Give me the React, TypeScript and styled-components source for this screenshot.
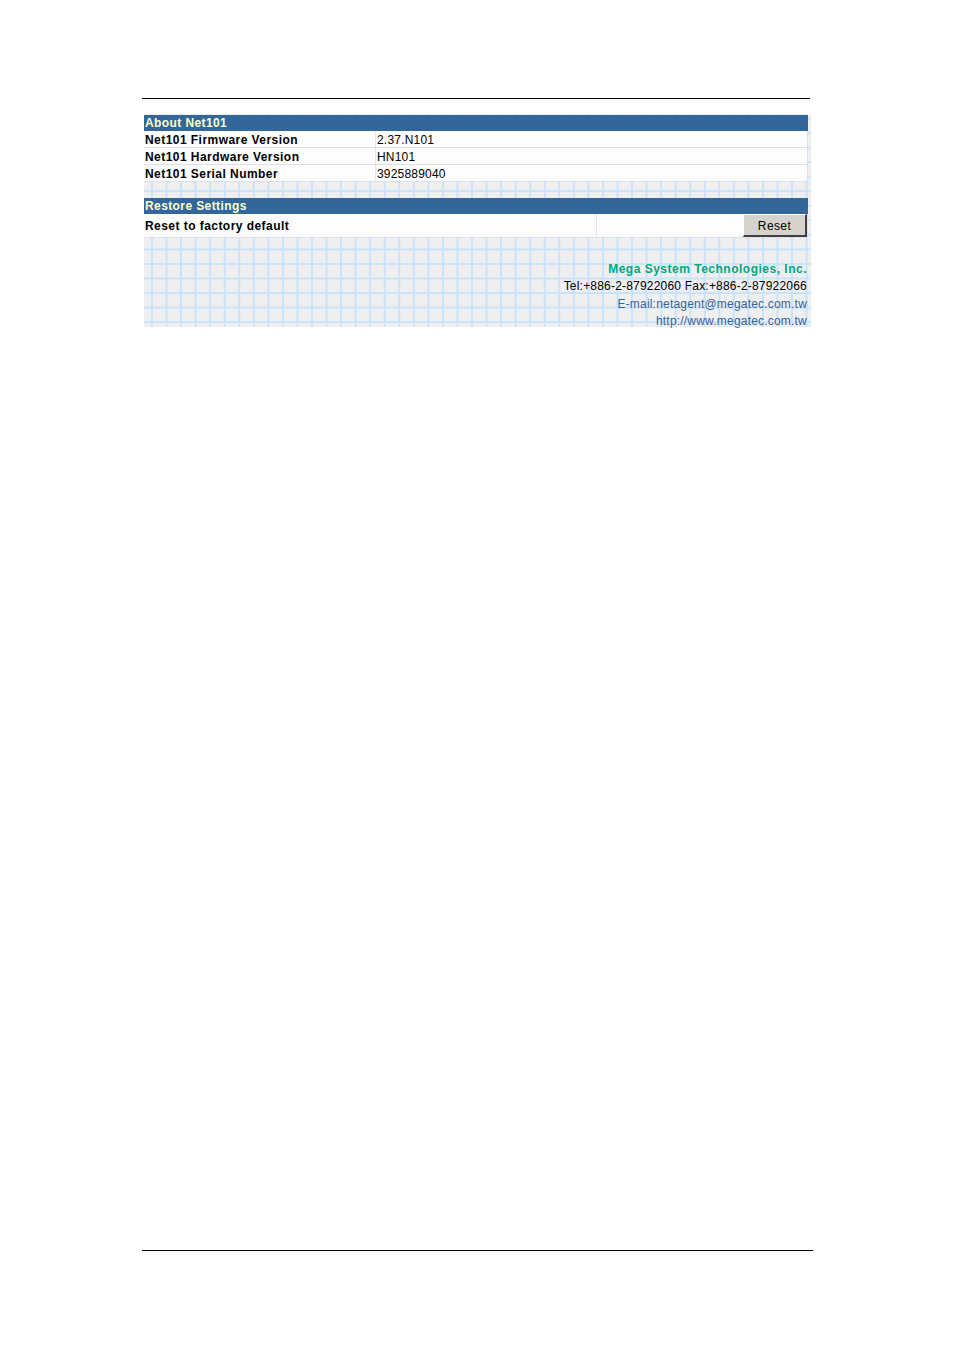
import React from "react";
import styled, { createGlobalStyle } from "styled-components";

const Global = createGlobalStyle`
  html, body { margin: 0; padding: 0; background: #ffffff; }
  body { font-family: "Liberation Sans", Arial, sans-serif; color: #000; }
`;

const Page = styled.div`
  padding-top: 98px;
  padding-left: 142px;
  width: 954px;
  height: 1351px;
  box-sizing: border-box;
`;

const Rule = styled.div<{ $width: number; $top?: number }>`
  width: ${(p) => p.$width}px;
  height: 1px;
  background: #000;
  margin-top: ${(p) => p.$top ?? 0}px;
`;

const Panel = styled.div`
  margin-top: 15px;
  margin-left: 2px;
  width: 667px;
  height: 213px;
  box-sizing: border-box;
  padding: 1px 3px 0 0;
  background-color: #efefef;
  background-image:
    linear-gradient(to right, #c9e3fc 1.5px, transparent 1.5px),
    linear-gradient(to bottom, #c9e3fc 1.5px, transparent 1.5px);
  background-size: 14.55px 14.55px;
  background-position: 7px 3.5px;
  display: flex;
  flex-direction: column;
`;

const Section = styled.div<{ $gap?: number }>`
  width: 664px;
  margin-top: ${(p) => p.$gap ?? 0}px;
  display: flex;
  flex-direction: column;
`;

const SectionHeader = styled.div`
  height: 16px;
  line-height: 17px;
  background: #336699;
  color: #ffffcc;
  font-weight: bold;
  font-size: 12px;
  letter-spacing: 0.4px;
  padding-left: 1px;
`;

const Row = styled.div<{ $height: number; $cols: string }>`
  display: grid;
  grid-template-columns: ${(p) => p.$cols};
  height: ${(p) => p.$height}px;
  background: #fdfdfd;
  border-bottom: 1px solid #dfdfec;
  border-right: 1px solid #dfdfec;
`;

const LabelCell = styled.div`
  font-size: 12px;
  font-weight: bold;
  letter-spacing: 0.45px;
  padding: 1px 0 0 1px;
  display: flex;
  align-items: center;
  border-right: 1px solid #e4e4ee;
  white-space: nowrap;
`;

const ValueCell = styled.div`
  font-size: 12px;
  letter-spacing: 0.2px;
  padding: 1px 0 0 1px;
  display: flex;
  align-items: center;
  white-space: nowrap;
`;

const ButtonCell = styled.div`
  display: flex;
  justify-content: flex-end;
  align-items: stretch;
`;

const ResetButton = styled.button`
  width: 64px;
  margin: 0;
  padding: 1px 0 0 0;
  background: #d6d3ce;
  border-style: solid;
  border-width: 1px 2px 2px 1px;
  border-color: #ffffff #404040 #404040 #ffffff;
  font-family: "Liberation Sans", Arial, sans-serif;
  font-size: 12px;
  color: #000;
  letter-spacing: 0.4px;
`;

const Footer = styled.div`
  margin-top: 23px;
  padding-right: 1px;
  display: flex;
  flex-direction: column;
  align-items: flex-end;
  font-size: 12px;
  line-height: 17.3px;
`;

const FooterLine = styled.div<{ $tone: "company" | "plain" | "link" }>`
  white-space: nowrap;
  color: ${(p) =>
    p.$tone === "company" ? "#00a77c" : p.$tone === "link" ? "#336699" : "#000"};
  font-weight: ${(p) => (p.$tone === "company" ? "bold" : "normal")};
  letter-spacing: ${(p) => (p.$tone === "company" ? "0.5px" : "0.2px")};
`;

const info = [
  { label: "Net101 Firmware Version", value: "2.37.N101" },
  { label: "Net101 Hardware Version", value: "HN101" },
  { label: "Net101 Serial Number", value: "3925889040" },
];

export default function App() {
  return (
    <>
      <Global />
      <Page>
        <Rule $width={668} />
        <Panel>
          <Section>
            <SectionHeader>About Net101</SectionHeader>
            {info.map((r) => (
              <Row key={r.label} $height={16} $cols="232px 1fr">
                <LabelCell>{r.label}</LabelCell>
                <ValueCell>{r.value}</ValueCell>
              </Row>
            ))}
          </Section>
          <Section $gap={16}>
            <SectionHeader>Restore Settings</SectionHeader>
            <Row $height={23} $cols="453px 1fr">
              <LabelCell>Reset to factory default</LabelCell>
              <ButtonCell>
                <ResetButton type="button">Reset</ResetButton>
              </ButtonCell>
            </Row>
          </Section>
          <Footer>
            <FooterLine $tone="company">Mega System Technologies, Inc.</FooterLine>
            <FooterLine $tone="plain">Tel:+886-2-87922060 Fax:+886-2-87922066</FooterLine>
            <FooterLine $tone="link">E-mail:netagent@megatec.com.tw</FooterLine>
            <FooterLine $tone="link">http://www.megatec.com.tw</FooterLine>
          </Footer>
        </Panel>
        <Rule $width={671} $top={923} />
      </Page>
    </>
  );
}
